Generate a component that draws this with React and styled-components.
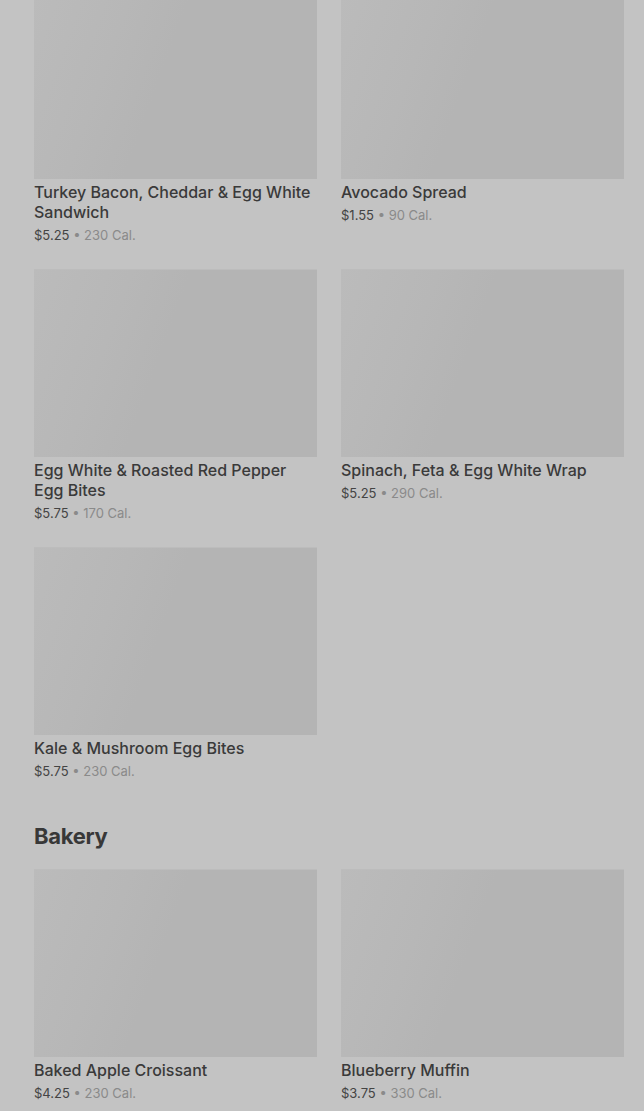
import styled, { createGlobalStyle } from "styled-components";

const GlobalStyle = createGlobalStyle`
  html, body {
    margin: 0;
    padding: 0;
    background: #c3c3c3;
    font-family: Inter, "Noto Sans", "Liberation Sans", sans-serif;
    overflow: hidden;
  }
`;

const Page = styled.main`
  padding: 0 20px 0 34px;
  margin-top: -9px;
`;

const Section = styled.section`
  margin-bottom: ${(p) => p.$gap || 26}px;
`;

const Heading = styled.h2`
  margin: 0 0 19px;
  font-size: 22px;
  line-height: 28px;
  font-weight: 700;
  letter-spacing: -0.3px;
  color: #383838;
`;

const Grid = styled.div`
  display: grid;
  grid-template-columns: 1fr 1fr;
  column-gap: 24px;
  row-gap: 25px;
  align-items: start;
`;

const Card = styled.article`
  display: flex;
  flex-direction: column;
`;

const Thumb = styled.div`
  height: 188px;
  box-shadow: inset 0 1px 0 #bcbcbc;
  background: linear-gradient(110deg, #bbbbbb 0%, #b7b7b7 28%, #b4b4b4 45%, #b4b4b4 100%);
  margin-bottom: 3px;
`;

const Title = styled.h3`
  margin: 0;
  padding-right: 4px;
  font-size: 16px;
  line-height: 20px;
  font-weight: 500;
  color: #3a3a3a;
`;

const Meta = styled.p`
  margin: 4px 0 0;
  font-size: 13px;
  line-height: 18px;
  color: #8a8a8a;
`;

const Price = styled.span`
  color: #444;
`;

const breakfast = [
  { name: "Turkey Bacon, Cheddar & Egg White Sandwich", price: "$5.25", cal: 230 },
  { name: "Avocado Spread", price: "$1.55", cal: 90 },
  { name: "Egg White & Roasted Red Pepper Egg Bites", price: "$5.75", cal: 170 },
  { name: "Spinach, Feta & Egg White Wrap", price: "$5.25", cal: 290 },
  { name: "Kale & Mushroom Egg Bites", price: "$5.75", cal: 230 },
];

const bakery = [
  { name: "Baked Apple Croissant", price: "$4.25", cal: 230 },
  { name: "Blueberry Muffin", price: "$3.75", cal: 330 },
];

function Item({ item }) {
  return (
    <Card>
      <Thumb />
      <Title>{item.name}</Title>
      <Meta>
        <Price>{item.price}</Price> • {item.cal} Cal.
      </Meta>
    </Card>
  );
}

export default function App() {
  return (
    <>
      <GlobalStyle />
      <Page>
        <Section $gap={42}>
          <Grid>
            {breakfast.map((item) => (
              <Item key={item.name} item={item} />
            ))}
          </Grid>
        </Section>
        <Section>
          <Heading>Bakery</Heading>
          <Grid>
            {bakery.map((item) => (
              <Item key={item.name} item={item} />
            ))}
          </Grid>
        </Section>
      </Page>
    </>
  );
}
